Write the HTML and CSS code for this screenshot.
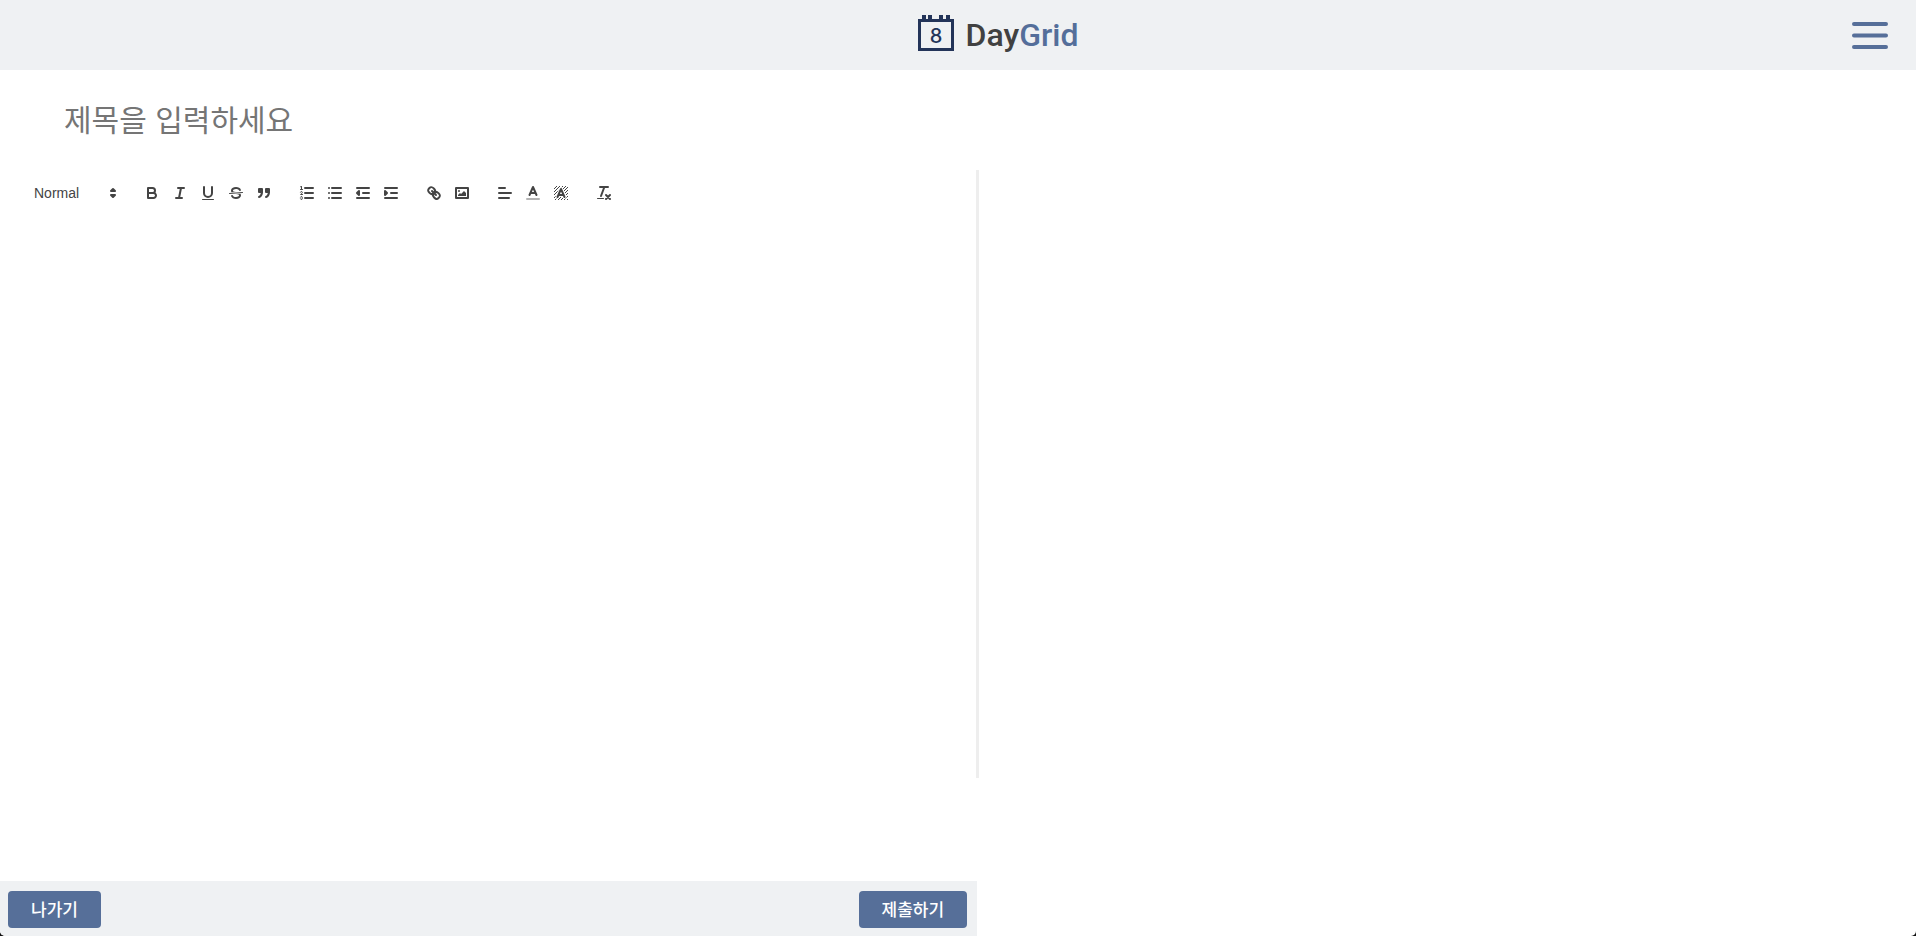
FILE: index.html
```html
<!DOCTYPE html>
<html lang="ko">
<head>
<meta charset="utf-8">
<title>DayGrid</title>
<link rel="stylesheet" href="styles.css">
</head>
<body>
<header class="header">
  <a class="logo" href="#">
    <svg class="logo-mark" viewBox="0 0 36 36" aria-hidden="true">
      <path class="logo-frame" d="M1.500 5.500h33v29h-33z"/>
      <path class="logo-rings" d="M4 0h4v5H4zM10 0h4v5h-4zM21 0h4v5h-4zM28 0h4v5h-4z"/>
      <text class="logo-day" x="18" y="28" text-anchor="middle">8</text>
    </svg>
    <span class="logo-name">Day<span class="logo-accent">Grid</span></span>
  </a>
  <button class="menu" type="button" aria-label="메뉴">
    <svg viewBox="0 0 36 30" aria-hidden="true"><path d="M2 4h32M2 15.500h32M2 27h32"/></svg>
  </button>
</header>
<main class="page">
  <input class="title" type="text" aria-label="제목" placeholder="제목을 입력하세요">
  <div class="workspace">
    <section class="editor">
      <div class="toolbar" role="toolbar" aria-label="서식">
        <div class="group">
          <button class="picker" type="button">Normal
            <svg viewBox="0 0 18 18"><polygon class="s" points="7 11 9 13 11 11 7 11"/><polygon class="s" points="7 7 9 5 11 7 7 7"/></svg>
          </button>
        </div>
        <div class="group">
          <button class="tool" type="button" aria-label="Bold"><svg viewBox="0 0 18 18"><path class="s" d="M5,4H9.500A2.500,2.500,0,0,1,12,6.500v0A2.500,2.500,0,0,1,9.500,9H5V4Z"/><path class="s" d="M5,9h5.500A2.500,2.500,0,0,1,13,11.500v0A2.500,2.500,0,0,1,10.500,14H5V9Z"/></svg></button>
          <button class="tool" type="button" aria-label="Italic"><svg viewBox="0 0 18 18"><path class="s" d="M7 4h6M5 14h6M8 14L10 4"/></svg></button>
          <button class="tool" type="button" aria-label="Underline"><svg viewBox="0 0 18 18"><path class="s" d="M5,3V9a4.012,4.012,0,0,0,4,4H9a4.012,4.012,0,0,0,4-4V3"/><rect class="f" height="1" rx="0.5" width="12" x="3" y="15"/></svg></button>
          <button class="tool" type="button" aria-label="Strike"><svg viewBox="0 0 18 18"><path class="s t" d="M15.500 8.500L2.500 9.500"/><path class="f" d="M9.007,8C6.542,7.791,6,7.519,6,6.500,6,5.792,7.283,5,9,5c1.571,0,2.765.679,2.969,1.309a1,1,0,0,0,1.900-.617C13.356,4.106,11.354,3,9,3,6.200,3,4,4.538,4,6.500a3.200,3.200,0,0,0,.5,1.843Z"/><path class="f" d="M8.984,10C11.457,10.208,12,10.479,12,11.500c0,0.708-1.283,1.500-3,1.500-1.571,0-2.765-.679-2.969-1.309a1,1,0,1,0-1.900.617C4.644,13.894,6.646,15,9,15c2.800,0,5-1.538,5-3.500a3.200,3.200,0,0,0-.5-1.843Z"/></svg></button>
          <button class="tool" type="button" aria-label="Blockquote"><svg viewBox="0 0 18 18"><rect class="s f" height="3" width="3" x="4" y="5"/><rect class="s f" height="3" width="3" x="11" y="5"/><path class="s f" d="M7,8c0,4.031-3,5-3,5"/><path class="s f" d="M14,8c0,4.031-3,5-3,5"/></svg></button>
        </div>
        <div class="group">
          <button class="tool" type="button" aria-label="Ordered list"><svg viewBox="0 0 18 18"><path class="s" d="M7 4h8M7 9h8M7 14h8"/><path class="s t" d="M2.500 5.500h2"/><path class="f" d="M3.500,6A0.500,0.500,0,0,1,3,5.500V3.085l-0.276.138A0.500,0.500,0,0,1,2.053,3c-0.124-.247-0.023-0.324.224-0.447l1-.5A0.500,0.500,0,0,1,4,2.500v3A0.500,0.500,0,0,1,3.500,6Z"/><path class="s t" d="M4.500,10.500h-2c0-.234,1.850-1.076,1.850-2.234A0.959,0.959,0,0,0,2.500,8.156"/><path class="s t" d="M2.500,14.846a0.959,0.959,0,0,0,1.850-.109A0.700,0.700,0,0,0,3.750,14a0.688,0.688,0,0,0,.6-0.736,0.959,0.959,0,0,0-1.850-.109"/></svg></button>
          <button class="tool" type="button" aria-label="Bullet list"><svg viewBox="0 0 18 18"><path class="s" d="M6 4h9M6 9h9M6 14h9M3 4h0M3 9h0M3 14h0"/></svg></button>
          <button class="tool" type="button" aria-label="Outdent"><svg viewBox="0 0 18 18"><path class="s" d="M3 14h12M3 4h12M9 9h6"/><polyline class="s f" points="5 7 5 11 3 9 5 7"/></svg></button>
          <button class="tool" type="button" aria-label="Indent"><svg viewBox="0 0 18 18"><path class="s" d="M3 14h12M3 4h12M9 9h6"/><polyline class="s f" points="3 7 3 11 5 9 3 7"/></svg></button>
        </div>
        <div class="group">
          <button class="tool" type="button" aria-label="Link"><svg viewBox="0 0 18 18"><path class="s" d="M7 7l4 4"/><path class="s" d="M8.900,4.577a3.476,3.476,0,0,1,.36,4.679A3.476,3.476,0,0,1,4.577,8.900C3.185,7.500,2.035,6.400,4.217,4.217S7.500,3.185,8.900,4.577Z"/><path class="s" d="M13.423,9.100a3.476,3.476,0,0,0-4.679-.36,3.476,3.476,0,0,0,.36,4.679c1.392,1.392,2.500,2.542,4.679.36S14.815,10.500,13.423,9.100Z"/></svg></button>
          <button class="tool" type="button" aria-label="Image"><svg viewBox="0 0 18 18"><rect class="s" height="10" width="12" x="3" y="4"/><circle class="f" cx="6" cy="7" r="1"/><polyline class="f" points="5 12 5 11 7 9 8 10 11 7 13 9 13 12 5 12"/></svg></button>
        </div>
        <div class="group">
          <button class="tool" type="button" aria-label="Align"><svg viewBox="0 0 18 18"><path class="s" d="M3 9h12M3 14h10M3 4h6"/></svg></button>
          <button class="tool" type="button" aria-label="Text color"><svg viewBox="0 0 18 18"><path class="s faded" d="M3 15h12"/><path class="s" d="M5.500 11L9 3L12.500 11M11.630 9H6.380"/></svg></button>
          <button class="tool" type="button" aria-label="Background color"><svg viewBox="0 0 18 18"><defs><pattern id="hatch" width="3" height="3" x="2" y="2" patternUnits="userSpaceOnUse"><path class="f" d="M2 0h1v1H2zM1 1h1v1H1zM0 2h1v1H0z"/></pattern></defs><rect x="2" y="2" width="14" height="14" fill="url(#hatch)"/><path class="s halo" d="M5.500 13L9 5L12.500 13"/><path class="s" d="M5.500 13L9 5L12.500 13M11.630 11H6.380"/></svg></button>
        </div>
        <div class="group">
          <button class="tool" type="button" aria-label="Clear formatting"><svg viewBox="0 0 18 18"><path class="s" d="M5 3h8M6 12L9.350 3"/><path class="s" d="M11 11l4 4M15 11l-4 4"/><rect class="f" height="1" rx="0.5" width="7" x="2" y="14"/></svg></button>
        </div>
      </div>
      <div class="content" contenteditable="true" role="textbox" aria-label="본문"></div>
    </section>
    <section class="preview"></section>
  </div>
</main>
<footer class="footer">
  <button class="action" type="button">나가기</button>
  <button class="action" type="button">제출하기</button>
</footer>
</body>
</html>
```
FILE: styles.css
```css
* { box-sizing: border-box; }
html { background: #111; }
body {
  margin: 0;
  min-height: 100vh;
  display: flex;
  flex-direction: column;
  border-radius: 0 0 5px 5px;
  background: #fff;
  font-family: "Noto Sans", "Noto Sans CJK KR", sans-serif;
}
button { border: 0; font: inherit; cursor: pointer; }
.header {
  display: grid;
  grid-template-columns: 1fr auto 1fr;
  align-items: center;
  height: 70px;
  padding: 0 28px 0 108px;
  background: #eff1f3;
}
.logo {
  grid-column: 2;
  display: flex;
  align-items: center;
  gap: 12px;
  text-decoration: none;
}
.logo-mark { width: 36px; height: 36px; margin-bottom: 4px; }
.logo-frame { fill: none; stroke: #233459; stroke-width: 3; }
.logo-rings { fill: #233459; }
.logo-day { fill: #233459; font: 500 20px Inter, sans-serif; }
.logo-name { color: #414141; font: 500 32px/36px Roboto, sans-serif; }
.logo-accent { color: #546e9a; }
.menu { justify-self: end; padding: 0; background: none; }
.menu svg { display: block; width: 36px; height: 30px; }
.menu path { fill: none; stroke: #566f99; stroke-width: 4; stroke-linecap: round; }
.page { flex: 1; }
.title {
  display: block;
  width: 100%;
  height: 100px;
  padding: 0 64px 4px;
  border: 0;
  outline: 0;
  background: none;
  font: 30px "Noto Sans CJK KR", sans-serif;
}
.title::placeholder { color: #757575; }
.workspace { display: grid; grid-template-columns: 979fr 937fr; height: 65vh; }
.editor { padding: 3px 16px 0; border-right: 3px solid #eee; }
.toolbar { display: flex; flex-wrap: wrap; gap: 15px; padding: 8px 9px; }
.group { display: flex; }
.tool { width: 28px; height: 24px; padding: 3px 5px; background: none; }
.tool svg, .picker svg { display: block; width: 18px; height: 18px; }
.picker {
  display: flex;
  align-items: center;
  justify-content: space-between;
  width: 98px;
  height: 24px;
  padding: 0 1px 0 9px;
  background: none;
  color: #444;
  font: 500 14px "Liberation Sans", sans-serif;
}
.s { fill: none; stroke: #444; stroke-width: 2; stroke-linecap: round; stroke-linejoin: round; }
.t { stroke-width: 1; }
.f { fill: #444; }
.halo { fill: #fff; stroke: #fff; stroke-width: 4; }
.faded { opacity: .4; }
.content { padding: 12px 15px; outline: 0; }
.footer {
  display: flex;
  justify-content: space-between;
  width: 51%;
  padding: 10px 10px 8px 8px;
  border-bottom-left-radius: 5px;
  background: #eff1f3;
}
.action {
  height: 37px;
  padding: 0 23px 2px;
  border-radius: 4px;
  background: #566f99;
  color: #fff;
  font: 500 17px "Noto Sans CJK KR", sans-serif;
}
```
